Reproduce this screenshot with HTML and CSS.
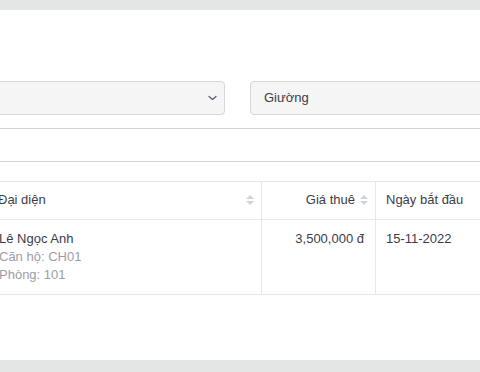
FILE: index.html
```html
<!DOCTYPE html>
<html lang="vi">
<head>
<meta charset="utf-8">
<link rel="stylesheet" href="styles.css">
</head>
<body>
<div class="card">
  <div class="inner">
    <div class="filters">
      <div class="select">
        <span class="value"></span>
        <svg class="chev" width="9" height="6" viewBox="0 0 9 6"><path d="M1 1.5 L4.5 4.5 L8 1.5" fill="none" stroke="#5a5a66" stroke-width="1.2" stroke-linecap="round" stroke-linejoin="round"/></svg>
      </div>
      <div class="select">
        <span class="value">Giường</span>
      </div>
    </div>
    <div class="search"></div>
    <div class="table">
      <div class="row head">
        <div class="cell c1"><span>Đại diện</span><span class="sort"></span></div>
        <div class="cell c2 right"><span>Giá thuê</span><span class="sort"></span></div>
        <div class="cell c3"><span>Ngày bắt đầu</span></div>
      </div>
      <div class="row body">
        <div class="cell c1 stack">
          <span>Lê Ngọc Anh</span>
          <span class="muted">Căn hộ: CH01</span>
          <span class="muted">Phòng: 101</span>
        </div>
        <div class="cell c2 right num">3,500,000 đ</div>
        <div class="cell c3">15-11-2022</div>
      </div>
    </div>
  </div>
</div>
</body>
</html>
```
FILE: styles.css
```css
html, body {
  margin: 0;
  padding: 0;
  overflow: hidden;
}
body {
  background: #e4e5e5;
  padding-top: 10px;
  font-family: "Liberation Sans", Arial, sans-serif;
  font-size: 13px;
  color: #3c3c47;
}
.card {
  background: #ffffff;
  height: 350px;
  overflow: hidden;
}
.inner {
  margin-left: -16px;
  width: 520px;
  padding-top: 71px;
}
.filters {
  display: grid;
  grid-template-columns: 241px 240px;
  column-gap: 25px;
}
.select {
  box-sizing: border-box;
  height: 34px;
  background: #f5f5f6;
  border: 1px solid #d6d6dd;
  border-radius: 4px;
  display: flex;
  align-items: center;
  justify-content: space-between;
  padding: 0 7px 0 13px;
  line-height: 18px;
}
.chev {
  display: block;
}
.search {
  box-sizing: border-box;
  margin-top: 13px;
  height: 34px;
  border-top: 1px solid #d3d3db;
  border-bottom: 1px solid #d3d3db;
}
.table {
  margin-top: 19px;
  border-top: 1px solid #e7e7ec;
}
.row {
  display: grid;
  grid-template-columns: 278px 114px 1fr;
  border-bottom: 1px solid #e7e7ec;
}
.cell {
  box-sizing: border-box;
  border-right: 1px solid #e7e7ec;
  line-height: 18px;
}
.cell.c3 {
  border-right: none;
  padding-left: 10px;
}
.head .cell {
  padding-top: 9px;
  padding-bottom: 10px;
  display: flex;
  align-items: center;
}
.head .c1 {
  padding-left: 14px;
  padding-right: 7px;
  justify-content: space-between;
}
.head .c2 {
  justify-content: flex-end;
  padding-right: 7px;
  gap: 5px;
}
.sort {
  display: flex;
  flex-direction: column;
  gap: 2px;
  width: 8px;
}
.sort::before,
.sort::after {
  content: "";
  width: 0;
  height: 0;
  border-left: 4px solid transparent;
  border-right: 4px solid transparent;
}
.sort::before {
  border-bottom: 4px solid #d2d2d9;
}
.sort::after {
  border-top: 4px solid #d2d2d9;
}
.body .cell {
  padding-top: 10px;
  padding-bottom: 10px;
}
.body .c1 {
  padding-left: 15px;
}
.stack {
  display: flex;
  flex-direction: column;
}
.muted {
  color: #9c9ca6;
}
.body .c2 {
  text-align: right;
  padding-right: 11px;
}
```
